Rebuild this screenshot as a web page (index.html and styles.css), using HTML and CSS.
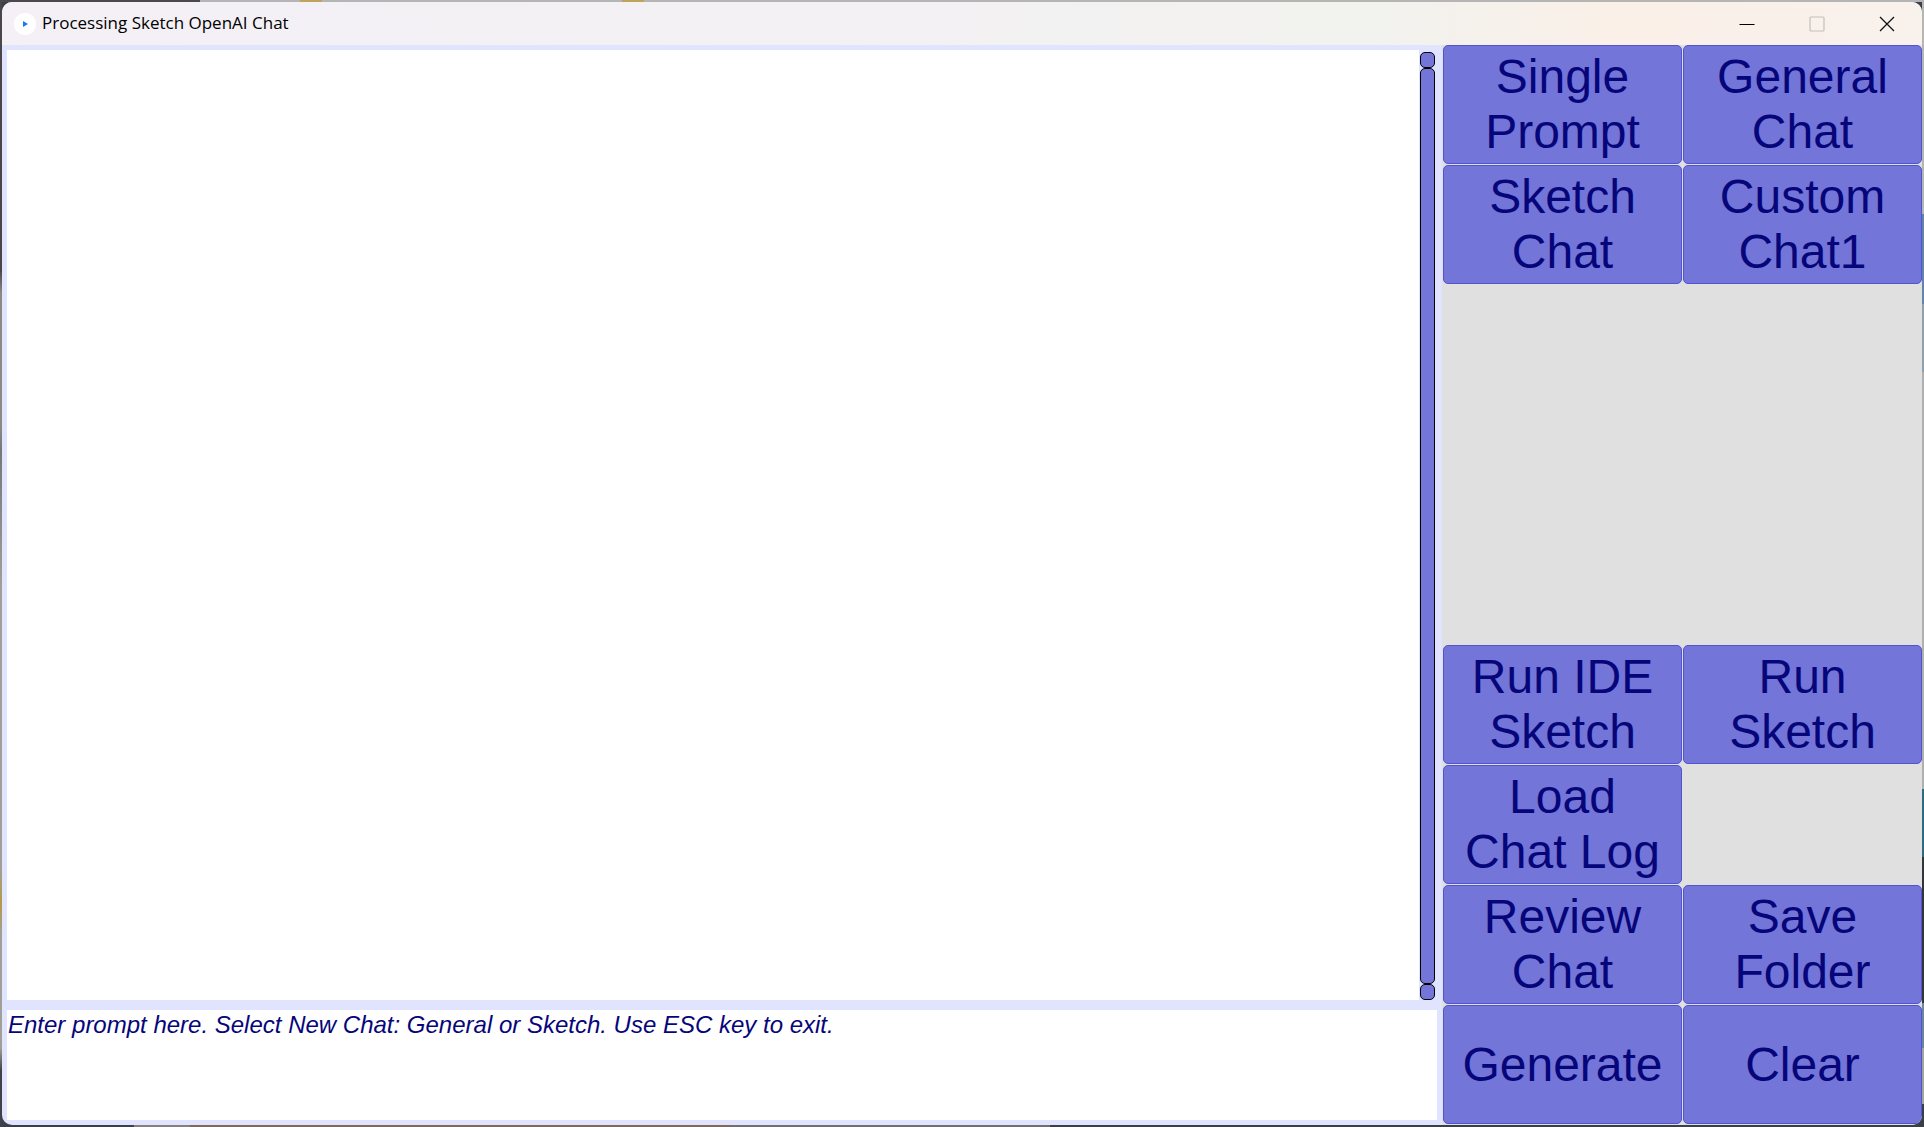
FILE: index.html
```html
<!DOCTYPE html>
<html lang="en">
<head>
<meta charset="utf-8">
<title>Processing Sketch OpenAI Chat</title>
<link rel="stylesheet" href="styles.css">
</head>
<body>
<div class="desktop">
  <main class="window">
    <header class="titlebar">
      <svg class="app-icon" viewBox="0 0 22 22" aria-hidden="true">
        <circle cx="11" cy="11" r="11" fill="#fff"/>
        <path d="M9 8l5 3-5 3z" fill="#1c78f5"/>
      </svg>
      <h1 class="title">Processing Sketch OpenAI Chat</h1>
      <div class="controls">
        <button class="control" type="button" aria-label="Minimize">
          <svg viewBox="0 0 16 16"><path d="M.5 8.5h15" stroke="#000"/></svg>
        </button>
        <button class="control" type="button" aria-label="Maximize" disabled>
          <svg viewBox="0 0 16 16"><rect x="1" y="1" width="14" height="14" rx="1" fill="none" stroke="#c4bfb9" stroke-width="1.2"/></svg>
        </button>
        <button class="control" type="button" aria-label="Close">
          <svg viewBox="0 0 16 16"><path d="M1 1l14 14M15 1L1 15" stroke="#111" stroke-width="1.3"/></svg>
        </button>
      </div>
    </header>
    <div class="content">
      <section class="chat">
        <div class="output-row">
          <textarea class="output" aria-label="Chat output" readonly></textarea>
          <div class="scrollbar">
            <button class="scroll-end" type="button" aria-label="Scroll up"></button>
            <div class="thumb"></div>
            <button class="scroll-end" type="button" aria-label="Scroll down"></button>
          </div>
        </div>
        <textarea class="prompt" aria-label="Prompt" placeholder="Enter prompt here. Select New Chat: General or Sketch. Use ESC key to exit."></textarea>
      </section>
      <nav class="panel">
        <button class="key" type="button">Single<br>Prompt</button>
        <button class="key" type="button">General<br>Chat</button>
        <button class="key" type="button">Sketch<br>Chat</button>
        <button class="key" type="button">Custom<br>Chat1</button>
        <div class="blank"></div>
        <button class="key" type="button">Run IDE<br>Sketch</button>
        <button class="key" type="button">Run<br>Sketch</button>
        <button class="key first" type="button">Load<br>Chat Log</button>
        <button class="key first" type="button">Review<br>Chat</button>
        <button class="key" type="button">Save<br>Folder</button>
        <button class="key" type="button">Generate</button>
        <button class="key" type="button">Clear</button>
      </nav>
    </div>
  </main>
</div>
</body>
</html>
```
FILE: styles.css
```css
* {
  box-sizing: border-box;
}

body {
  margin: 0;
  font-family: "Liberation Sans", Arial, sans-serif;
}

/* The desktop shows only as a thin, many-coloured edge round the window. */
.desktop {
  height: 100vh;
  padding: 2px;
  background:
    linear-gradient(90deg, #4b484e 200px, #b6b5b5 200px 300px, #c0a35c 300px 322px, #b6b5b5 322px 622px, #c0a35c 622px 644px, #b6b5b5 644px) top / 100% 2px no-repeat,
    linear-gradient(90deg, #3b4048 134px, #85807c 134px 190px, #7d6a5c 190px 730px, #6f706f 730px 1050px, #3b4048 1050px) bottom / 100% 2px no-repeat,
    linear-gradient(#4a474c 24%, #8a8a82 26% 38%, #75777a 40%, #a0a098 52% 77%, #b59a45 80%, #a0a098 83% 93%, #3f424a 95%) left / 2px 100% no-repeat,
    linear-gradient(#b5b5b3 19%, #6484a8 19% 27%, #8ea0b0 27% 33%, #b0b0b0 33% 70%, #2f6a80 70% 76%, #333538 76% 89%, #6b8799 89% 93%, #a3a3a0 93% 98%, #3b4048 98%) right / 2px 100% no-repeat,
    #3b4048;
}

.window {
  display: flex;
  flex-direction: column;
  height: 100%;
  overflow: hidden;
  border-radius: 10px;
  background: #e0e4ff;
}

.titlebar {
  display: flex;
  align-items: center;
  height: 43px;
  flex: none;
  padding-left: 12px;
  background: linear-gradient(90deg, #f4f0f6, #f3f1f4 45%, #f2f2ee 72%, #faf0e8 84%, #f9f1ec);
}

.app-icon {
  width: 22px;
  height: 22px;
}

.title {
  flex: 1;
  margin: 0 0 0 6px;
  padding-bottom: 2px;
  font: 400 17px/24px "Open Sans", sans-serif;
  color: #000;
}

.controls {
  display: flex;
}

.control {
  width: 70px;
  height: 41px;
  padding: 0;
  border: 0;
  background: none;
}

.control svg {
  display: block;
  width: 16px;
  height: 16px;
  margin: auto;
}

.content {
  display: grid;
  grid-template-columns: 3fr 1fr;
  flex: 1;
  min-height: 0;
}

.chat {
  display: flex;
  flex-direction: column;
  gap: 10px;
  padding: 5px;
}

.output-row {
  display: flex;
  flex: 1;
  gap: 1px;
  padding-right: 2px;
}

.output,
.prompt {
  display: block;
  margin: 0;
  border: 0;
  border-radius: 0;
  outline: 0;
  resize: none;
  background: #fff;
}

.output {
  flex: 1;
}

.scrollbar {
  display: flex;
  flex-direction: column;
  width: 15px;
  padding-top: 2px;
}

.scroll-end,
.thumb {
  padding: 0;
  border: 1px solid #000;
  border-radius: 5px;
  background: #7375d8;
}

.scroll-end {
  height: 16px;
}

.thumb {
  flex: 1;
}

.prompt {
  height: 110px;
  padding: 1px;
  font: italic 24px/28px "Liberation Sans", Arial, sans-serif;
}

.prompt::placeholder {
  color: #06067a;
  opacity: 1;
}

.panel {
  display: grid;
  grid-template-columns: 1fr 1fr;
  grid-template-rows: repeat(9, 1fr);
  gap: 1px;
  padding: 0 0 1px 1px;
  background: #e0e0e0;
}

.blank {
  grid-column: 1 / -1;
  grid-row: span 3;
}

.key {
  padding: 0 0 1px;
  border: 1px solid #5153d0;
  border-radius: 5px;
  background: #7375d8;
  color: #06067a;
  font: 48px/55px "Liberation Sans", Arial, sans-serif;
}

.first {
  grid-column: 1;
}
```
